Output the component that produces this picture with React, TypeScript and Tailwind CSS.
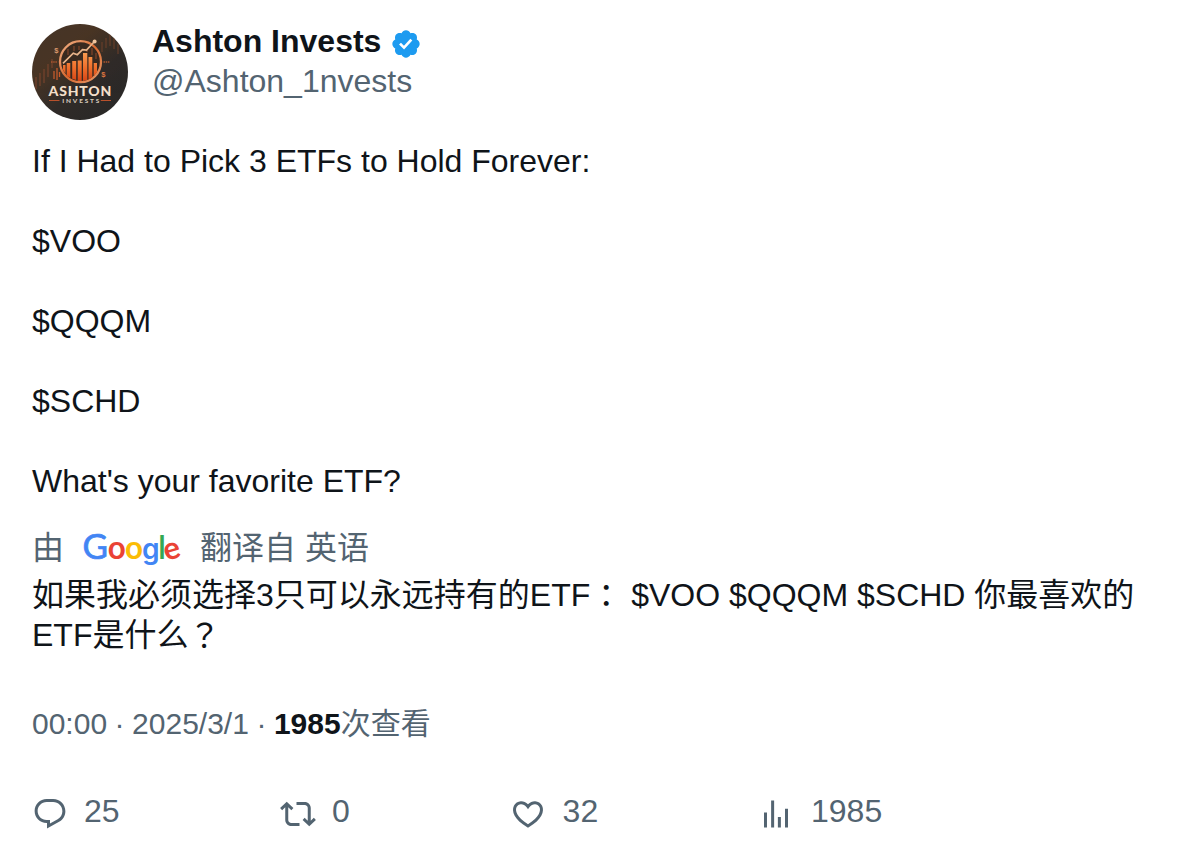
import type { ReactNode } from "react";

const ICONS = {
  verified:
    "M22.25 12c0-1.43-.88-2.67-2.19-3.34.46-1.39.2-2.9-.81-3.91s-2.52-1.27-3.91-.81c-.66-1.31-1.91-2.19-3.34-2.19s-2.67.88-3.33 2.19c-1.4-.46-2.91-.2-3.92.81s-1.26 2.52-.8 3.91c-1.31.67-2.2 1.91-2.2 3.34s.89 2.67 2.2 3.34c-.46 1.39-.21 2.9.8 3.91s2.52 1.26 3.91.81c.67 1.31 1.91 2.19 3.34 2.19s2.68-.88 3.34-2.19c1.39.45 2.9.2 3.91-.81s1.27-2.52.81-3.91c1.31-.67 2.19-1.91 2.19-3.34zm-11.71 4.2L6.8 12.46l1.41-1.42 2.26 2.26 4.8-5.23 1.47 1.36-6.2 6.77z",
  reply:
    "M1.751 10c0-4.42 3.584-8 8.005-8h4.366c4.49 0 8.129 3.64 8.129 8.13 0 2.96-1.607 5.68-4.196 7.11l-8.054 4.46v-3.69h-.067c-4.49.1-8.183-3.51-8.183-8.01zm8.005-6c-3.317 0-6.005 2.69-6.005 6 0 3.37 2.77 6.08 6.138 6.01l.351-.01h1.761v2.3l5.087-2.81c1.951-1.08 3.163-3.13 3.163-5.36 0-3.39-2.744-6.13-6.129-6.13H9.756z",
  repost:
    "M4.5 3.88l4.432 4.14-1.364 1.46L5.5 7.55V16c0 1.1.896 2 2 2H13v2H7.5c-2.209 0-4-1.79-4-4V7.55L1.432 9.48.068 8.02 4.5 3.88zM16.5 6H11V4h5.5c2.209 0 4 1.79 4 4v8.45l2.068-1.93 1.364 1.46-4.432 4.14-4.432-4.14 1.364-1.46 2.068 1.93V8c0-1.1-.896-2-2-2z",
  like: "M16.697 5.5c-1.222-.06-2.679.51-3.89 2.16l-.805 1.09-.806-1.09C9.984 6.01 8.526 5.44 7.304 5.5c-1.243.07-2.349.78-2.91 1.91-.552 1.12-.633 2.78.479 4.82 1.074 1.97 3.257 4.27 7.129 6.61 3.87-2.34 6.052-4.64 7.126-6.61 1.111-2.04 1.03-3.7.477-4.82-.561-1.13-1.666-1.84-2.908-1.91zm4.187 7.69c-1.351 2.48-4.001 5.12-8.379 7.67l-.503.3-.504-.3c-4.379-2.55-7.029-5.19-8.382-7.67-1.36-2.5-1.41-4.86-.514-6.67.887-1.79 2.647-2.91 4.601-3.01 1.651-.09 3.368.56 4.798 2.01 1.429-1.45 3.146-2.1 4.796-2.01 1.954.1 3.714 1.22 4.601 3.01.896 1.81.846 4.17-.514 6.67z",
  views:
    "M8.75 21V3h2v18h-2zM18 21V8.5h2V21h-2zM4 21l.004-10h2L6 21H4zm9.248 0v-7h2v7h-2z",
};

function Icon({ d, className }: { d: string; className: string }) {
  return (
    <svg viewBox="0 0 24 24" fill="currentColor" className={className} aria-hidden="true">
      <path d={d} />
    </svg>
  );
}

function Avatar() {
  return (
    <svg viewBox="0 0 96 96" className="size-24 shrink-0 rounded-full">
      <defs>
        <linearGradient id="bg" x1="0" y1="0" x2="0.8" y2="1">
          <stop offset="0" stopColor="#46352a" />
          <stop offset="0.35" stopColor="#493524" />
          <stop offset="0.65" stopColor="#302b28" />
          <stop offset="1" stopColor="#292827" />
        </linearGradient>
        <linearGradient id="bar" x1="0" y1="0" x2="0" y2="1">
          <stop offset="0" stopColor="#f79a50" />
          <stop offset="0.5" stopColor="#f0702c" />
          <stop offset="1" stopColor="#d64516" />
        </linearGradient>
        <linearGradient id="ring" x1="0" y1="0" x2="1" y2="1">
          <stop offset="0" stopColor="#efb38a" />
          <stop offset="0.5" stopColor="#d96a31" />
          <stop offset="1" stopColor="#e69a6a" />
        </linearGradient>
      </defs>
      <rect width="96" height="96" fill="url(#bg)" />
      <g stroke="#70412b" strokeWidth="2" opacity="0.7">
        <path d="M4 53v12M8 49v13M12 45v14M16 40v13M20 35v9" />
        <path d="M70 18v10M74 14v10M78 8v14M82 14v11M86 20v10" opacity="0.7" />
      </g>
      <path d="M22 47v8M25 44v12M27.5 48v5" stroke="#c55b2b" strokeWidth="1.3" />
      <path d="M19 38h6M71.5 38h6" stroke="#a9552f" strokeWidth="1.3" strokeDasharray="1.5 0.7" />
      <circle cx="48.5" cy="37.7" r="20.5" fill="#38291f" stroke="url(#ring)" strokeWidth="2.3" />
      <path d="M36 25v6M42 22v5M47 22v4M55 28v-3M60 24v7M64 29v6" stroke="#84462b" strokeWidth="1.2" />
      <g fill="url(#bar)">
        <path d="M31 41h2.5v8.5L31 46zM34.7 39H38.3v15l-3.6-2.5zM40.2 37h4v19l-4-1.2zM45.7 36.500h4V57h-4zM51 29h4.300v27l-4.300 1zM56.500 33h3.800v20.500l-3.800 2zM61.700 39h3.300v9.500l-3.300 3.500z" />
      </g>
      <path d="M31 39.3l10.300-10.100 4 1.500 5.200-5 4 .3 7-7.500" fill="none" stroke="#e9b48a" strokeWidth="1.7" />
      <circle cx="62.6" cy="17.4" r="2" fill="#f1c49d" />
      <g fontFamily="'Liberation Sans', Arial, sans-serif" fontWeight="700" fontSize="7.5">
        <text x="22.3" y="29.3" fill="#d8976c">$</text>
        <text x="69.2" y="52.5" fill="#dc7440">$</text>
      </g>
      <text x="16.5" y="71.7" textLength="62.8" fontFamily="Lato, sans-serif" fontWeight="900" fontSize="14" fill="#f3dfc9">
        ASHTON
      </text>
      <text x="30.3" y="79" textLength="37" fontFamily="Lato, sans-serif" fontWeight="900" fontSize="6.4" fill="#d5c7ba">
        INVESTS
      </text>
      <path d="M17 76.5h10.5M68.8 76.5H79" stroke="#b9512c" strokeWidth="1.2" />
    </svg>
  );
}

function GoogleLogo() {
  return (
    <svg
      viewBox="0 0 104 48"
      className="h-12 w-[104px] overflow-visible"
      role="img"
      aria-label="Google"
      fontFamily="Lato, sans-serif"
      fontWeight="700"
    >
      <text x="2.4" y="34" fontSize="34" textLength="25.5" lengthAdjust="spacingAndGlyphs" fill="#4285f4" stroke="#4285f4" strokeWidth="0.7" fontWeight="400">G</text>
      <text x="27.7" y="34" fontSize="32" textLength="18" lengthAdjust="spacingAndGlyphs" fill="#ea4335">o</text>
      <text x="44.9" y="34" fontSize="32" textLength="18" lengthAdjust="spacingAndGlyphs" fill="#fbbc05">o</text>
      <text x="61.9" y="34" fontSize="29.5" textLength="17.6" lengthAdjust="spacingAndGlyphs" fill="#4285f4" fontFamily="Inter, sans-serif" fontWeight="600">g</text>
      <text x="78.4" y="34" fontSize="32" textLength="7" lengthAdjust="spacingAndGlyphs" fill="#34a853">l</text>
      <text x="83.7" y="34" fontSize="31" fill="#ea4335" transform="rotate(-16 92 26.3)">e</text>
    </svg>
  );
}

function FullWidth({ children }: { children: ReactNode }) {
  return <span className="align-[-1px] font-['Noto_Sans_CJK_TC',sans-serif] leading-none">{children}</span>;
}

function Dot() {
  return <span className="mx-[-0.83px]">·</span>;
}

function Action({ icon, count, className }: { icon: string; count: ReactNode; className: string }) {
  return (
    <div className={`flex items-start ${className}`}>
      <Icon d={icon} className="mt-[5px] size-9 shrink-0" />
      <span className="leading-10">{count}</span>
    </div>
  );
}

export default function App() {
  return (
    <article className="h-[858px] w-[1196px] bg-white px-8 pt-[21px] font-['Liberation_Sans','Noto_Sans_CJK_SC',sans-serif] text-[32px] leading-10 text-[#0f1419]">
      <header className="flex h-[120px] gap-6">
        <div className="pt-[3px]">
          <Avatar />
        </div>
        <div>
          <div className="flex h-10 gap-[9px]">
            <span className="font-bold">Ashton Invests</span>
            <Icon d={ICONS.verified} className="mt-[7px] size-8 text-[#1d9bf0]" />
          </div>
          <div className="text-[#536471]">@Ashton_1nvests</div>
        </div>
      </header>

      <p className="h-[360px] whitespace-pre-line">
        {"If I Had to Pick 3 ETFs to Hold Forever:\n\n$VOO\n\n$QQQM\n\n$SCHD\n\nWhat's your favorite ETF?"}
      </p>

      <div className="mt-6 flex h-[50px] text-[#536471]">
        <span className="w-12 pt-[3px]">由</span>
        <div className="w-[120px]">
          <GoogleLogo />
        </div>
        <span className="whitespace-pre pt-[3px]">翻译自 英语</span>
      </div>
      <p className="h-20 whitespace-pre">
        如果我必须选择3只可以永远持有的ETF<FullWidth>：</FullWidth>
        {" $VOO $QQQM $SCHD 你最喜欢的\nETF是什么"}
        <FullWidth>？</FullWidth>
      </p>

      <div className="mt-[49px] h-10 text-[30px] text-[#536471]">
        00:00 <Dot /> 2025/3/1 <Dot /> <span className="font-bold text-[#0f1419]">1985</span>次查看
      </div>

      <footer className="mt-[47px] flex text-[#536471]">
        <Action icon={ICONS.reply} count="25" className="w-[248px] gap-4" />
        <Action icon={ICONS.repost} count="0" className="w-[230px] gap-4" />
        <Action icon={ICONS.like} count="32" className="w-[248px] gap-[16.6px]" />
        <Action icon={ICONS.views} count="1985" className="gap-[17px]" />
      </footer>
    </article>
  );
}
